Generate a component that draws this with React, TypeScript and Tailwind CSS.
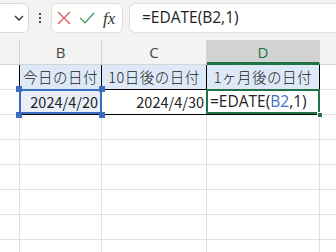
const font = "font-['Noto_Sans_CJK_JP','Noto_Sans',sans-serif]";

function Toolbar() {
  return (
    <div className="flex h-[40px] items-start bg-[#f3f3f3] pt-[3px]">
      <div className="-ml-[10px] flex h-[30px] w-[39px] items-center justify-end rounded-md border border-[#d9d9d9] bg-white pr-[4px]">
        <svg width="10" height="6" viewBox="0 0 10 6">
          <path d="M1 1 L5 5 L9 1" fill="none" stroke="#333" strokeWidth="1.4" />
        </svg>
      </div>
      <div className="flex h-[30px] w-[22px] flex-col items-center justify-center gap-[2px]">
        <span className="h-[2px] w-[2px] bg-[#444]" />
        <span className="h-[2px] w-[2px] bg-[#444]" />
        <span className="h-[2px] w-[2px] bg-[#444]" />
      </div>
      <div className="flex h-[30px] w-[72px] items-center gap-[8px] rounded-md border border-[#e0e0e0] bg-white pl-[5px]">
        <svg width="14" height="14" viewBox="0 0 14 14">
          <path d="M1 1 L13 13 M13 1 L1 13" stroke="#d9534f" strokeWidth="1.2" />
        </svg>
        <svg width="16" height="12" viewBox="0 0 16 12">
          <path d="M1 6 L6 11 L15 1" fill="none" stroke="#3e9a4f" strokeWidth="1.2" />
        </svg>
        <span className="font-['Liberation_Serif',serif] text-[17px] italic leading-none text-[#333]">fx</span>
      </div>
      <div className="ml-[6px] flex h-[30px] flex-1 items-center rounded-l-md border border-r-0 border-[#e0e0e0] bg-white pl-[12px]">
        <span className="font-['Open_Sans',sans-serif] text-[15.5px] text-[#222]">=EDATE(B2,1)</span>
      </div>
    </div>
  );
}

function ColHeader() {
  return (
    <div className="flex h-[25px] bg-[#f3f3f3] font-['Open_Sans',sans-serif] text-[15px] text-[#444]">
      <div className="w-[20px] border-r border-b border-[#d4d4d4]" />
      <div className="flex w-[82px] items-center justify-center border-r border-b border-[#d4d4d4]">B</div>
      <div className="flex w-[105px] items-center justify-center border-r border-b border-[#d4d4d4]">C</div>
      <div className="flex w-[113px] items-center justify-center border-r border-[#d4d4d4] border-b-[3px] border-b-[#217346] bg-[#d2d2d2] pt-[2px] text-[#217346]">D</div>
      <div className="flex-1 border-b border-[#d4d4d4]" />
    </div>
  );
}

function EmptyRow() {
  return (
    <div className="flex h-[25px]">
      <div className="w-[20px] border-r border-b border-[#e1e1e1]" />
      <div className="w-[82px] border-r border-b border-[#e1e1e1]" />
      <div className="w-[105px] border-r border-b border-[#e1e1e1]" />
      <div className="w-[113px] border-r border-b border-[#e1e1e1]" />
      <div className="flex-1 border-b border-[#e1e1e1]" />
    </div>
  );
}

function Handle({ className }: { className: string }) {
  return <span className={`absolute h-[6px] w-[6px] bg-[#3a6cc0] ${className}`} />;
}

export default function App() {
  return (
    <div className={`h-[252px] w-[336px] overflow-hidden bg-white ${font}`}>
      <Toolbar />
      <ColHeader />
      {/* row 1 */}
      <div className="flex h-[25px] text-[14.5px] font-light text-[#222]">
        <div className="w-[20px] border-r border-b border-r-black border-b-[#e1e1e1]" />
        <div className="flex w-[82px] items-center justify-center border-r border-b border-black bg-[#dde9f6] tracking-[0.5px]">今日の日付</div>
        <div className="flex w-[105px] items-center justify-center border-r border-b border-black bg-[#dde9f6] tracking-[0.5px]">10日後の日付</div>
        <div className="flex w-[113px] items-center justify-center border-r border-b border-black bg-[#dde9f6] tracking-[0.5px]">1ヶ月後の日付</div>
        <div className="flex-1 border-b border-[#e1e1e1]" />
      </div>
      {/* row 2 */}
      <div className="flex h-[25px] text-[14.5px] text-[#222]">
        <div className="w-[20px] border-r border-b border-r-black border-b-[#e1e1e1]" />
        <div className="relative flex w-[82px] items-center justify-end border-r border-b border-black bg-[#e9eff8] pr-[3px]">
          2024/4/20
          <span className="absolute -left-[1px] -top-[1px] h-[25px] w-[83px] border-2 border-[#3a6cc0]" />
          <Handle className="-left-[4px] -top-[4px]" />
          <Handle className="-right-[4px] -top-[4px]" />
          <Handle className="-left-[4px] -bottom-[4px]" />
          <Handle className="-right-[4px] -bottom-[4px]" />
        </div>
        <div className="flex w-[105px] items-center justify-end border-r border-b border-black pr-[2px]">2024/4/30</div>
        <div className="relative flex w-[113px] items-center border-r border-b border-black pl-[3px] font-['Open_Sans',sans-serif] text-[15.5px]">
          =EDATE(<span className="text-[#4472c4]">B2</span>,1)
          <span className="absolute -left-[1px] -top-[1px] h-[25px] w-[114px] border-2 border-[#217346]" />
          <span className="absolute -right-[4px] -bottom-[4px] h-[6px] w-[6px] border border-white bg-[#217346]" />
        </div>
        <div className="flex-1 border-b border-[#e1e1e1]" />
      </div>
      <EmptyRow />
      <EmptyRow />
      <EmptyRow />
      <EmptyRow />
      <EmptyRow />
      <EmptyRow />
    </div>
  );
}
